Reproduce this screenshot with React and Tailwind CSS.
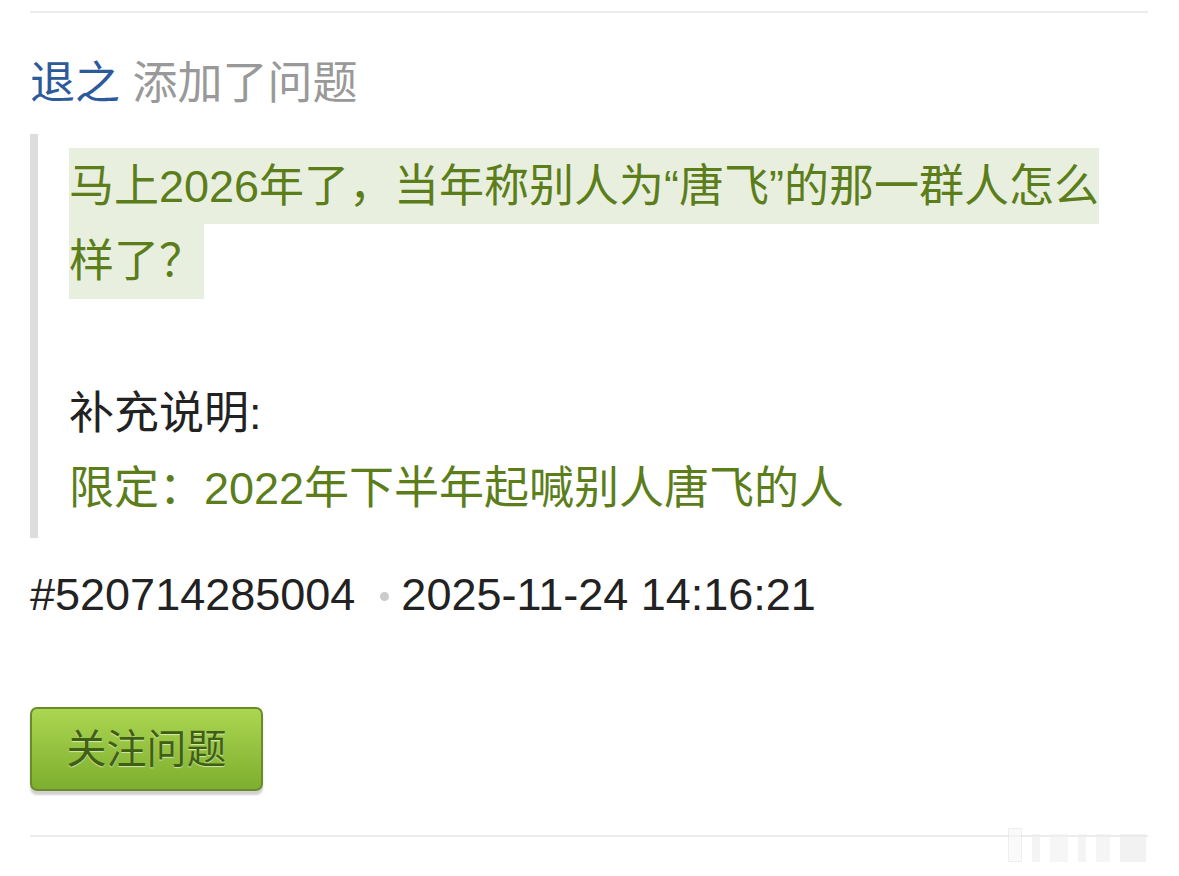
export default function App() {
  return (
    <div className="relative w-[1179px] h-[876px] bg-white overflow-hidden font-['Liberation_Sans','Noto_Sans_CJK_SC',sans-serif]">
      <div className="ml-[30px] w-[1118px] flex flex-col">
        <div className="mt-[11px] h-[2px] bg-[#ececec]" />
        <div className="mt-[33px] text-[45px] leading-[75px] whitespace-nowrap">
          <span className="text-[#2c5a9b]">退之</span>{" "}
          <span className="text-[#999999]">添加了问题</span>
        </div>
        <div className="mt-[13px] border-l-[8px] border-[#dddddd] pl-[31px] pr-[30px] pt-[14px] pb-[12px] text-[45px] leading-[75px]">
          <p>
            <span className="bg-[#e9efdf] text-[#5b7e1b] py-[12.5px] box-decoration-clone">
              马上2026年了，当年称别人为“唐飞”的那一群人怎么样了？
            </span>
          </p>
          <div className="h-[78px]" />
          <p className="text-[#222222]">补充说明:</p>
          <p className="text-[#5b7e1b]">限定：2022年下半年起喊别人唐飞的人</p>
        </div>
        <div className="mt-[19px] text-[45px] leading-[75px] text-[#222222] whitespace-nowrap flex items-center">
          <span>#520714285004</span>
          <span className="inline-block w-[9px] h-[9px] rounded-full bg-[#cccccc] ml-[25px] mr-[12px] mt-[4px]" />
          <span>2025-11-24 14:16:21</span>
        </div>
        <div className="mt-[75px]">
          <button className="w-[233px] h-[84px] rounded-[7px] border-2 border-[#6b8b2a] bg-gradient-to-b from-[#abd651] to-[#7eae2e] shadow-[0_4px_2px_rgba(0,0,0,0.18)] text-[40px] leading-none text-[#3f5f12] [text-shadow:0_1px_1px_rgba(255,255,255,0.6)] flex items-center justify-center">
            关注问题
          </button>
        </div>
        <div className="mt-[44px] h-[2px] bg-[#ececec]" />
      </div>
      <div className="absolute left-[1008px] top-[828px] flex items-end gap-[10px] opacity-60">
        <div className="w-[14px] h-[34px] border border-[#e4e4e4] bg-[#f7f7f7]" />
        <div className="w-[8px] h-[28px] bg-[#eeeeee]" />
        <div className="w-[18px] h-[28px] bg-[#f1f1f1]" />
        <div className="w-[8px] h-[28px] bg-[#eeeeee]" />
        <div className="w-[14px] h-[28px] bg-[#efefef]" />
        <div className="w-[26px] h-[28px] bg-[#eaeaea]" />
      </div>
    </div>
  );
}
